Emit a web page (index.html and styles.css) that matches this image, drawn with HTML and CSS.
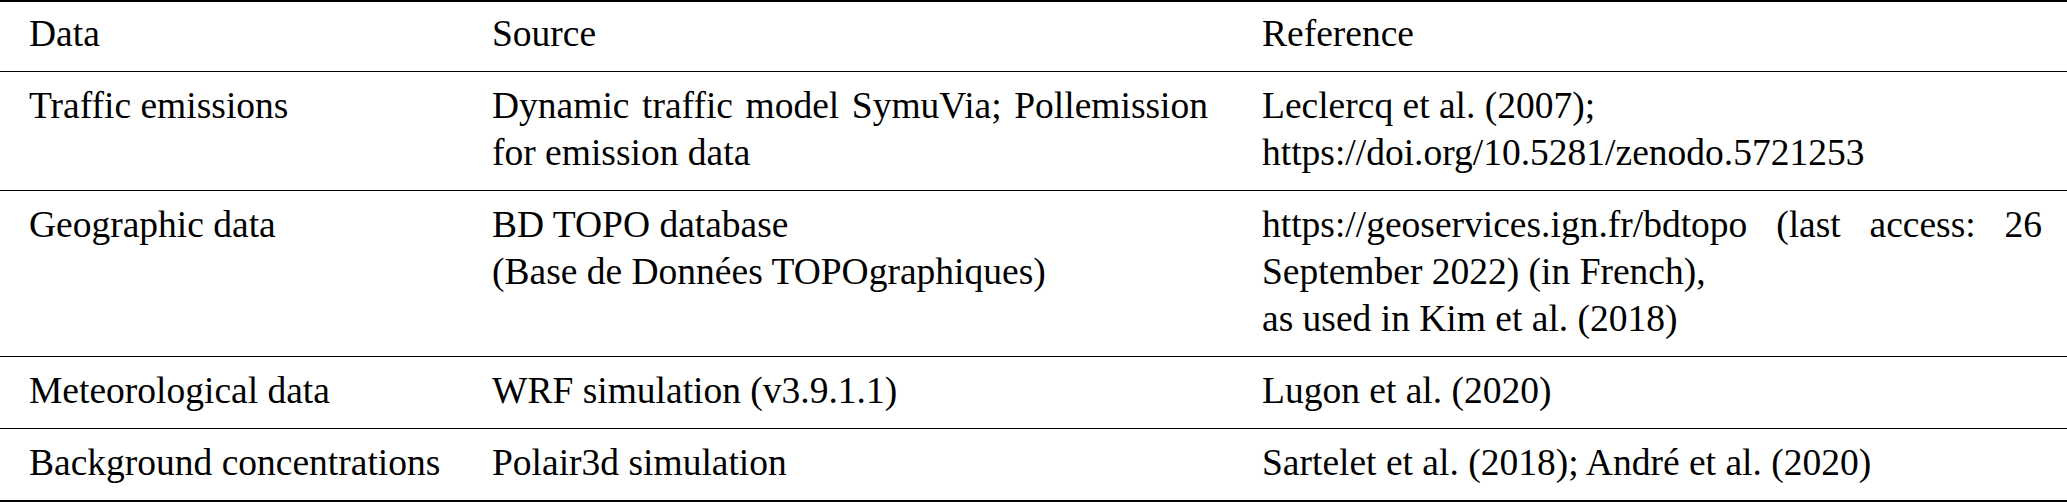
FILE: index.html
```html
<!DOCTYPE html>
<html lang="en">
<head>
<meta charset="utf-8">
<title>Data sources</title>
<link rel="stylesheet" href="styles.css">
</head>
<body>
<table class="data-table">
  <colgroup>
    <col class="col-data">
    <col class="col-source">
    <col class="col-ref">
  </colgroup>
  <thead>
    <tr class="head-row">
      <th class="name-cell">Data</th>
      <th>Source</th>
      <th>Reference</th>
    </tr>
  </thead>
  <tbody>
    <tr>
      <td class="name-cell">Traffic emissions</td>
      <td><span class="just">Dynamic traffic model SymuVia; Pollemission</span>for emission data</td>
      <td>Leclercq et al. (2007);<br>https://doi.org/10.5281/zenodo.5721253</td>
    </tr>
    <tr>
      <td class="name-cell">Geographic data</td>
      <td>BD TOPO database<br>(Base de Données TOPOgraphiques)</td>
      <td><span class="just">https://geoservices.ign.fr/bdtopo (last access: 26</span>September 2022) (in French),<br>as used in Kim et al. (2018)</td>
    </tr>
    <tr>
      <td class="name-cell">Meteorological data</td>
      <td>WRF simulation (v3.9.1.1)</td>
      <td>Lugon et al. (2020)</td>
    </tr>
    <tr class="last-row">
      <td class="name-cell">Background concentrations</td>
      <td>Polair3d simulation</td>
      <td>Sartelet et al. (2018); André et al. (2020)</td>
    </tr>
  </tbody>
</table>
</body>
</html>
```

FILE: styles.css
```css
html, body {
  margin: 0;
  padding: 0;
  background: #ffffff;
}

.data-table {
  width: 2067px;
  table-layout: fixed;
  border-collapse: collapse;
  border-top: 2px solid #000;
  border-bottom: 2px solid #000;
  font-family: "Liberation Serif", "Times New Roman", serif;
  font-size: 37.5px;
  line-height: 47px;
  color: #000;
}

.col-data { width: 463px; }
.col-source { width: 770px; }
.col-ref { width: 834px; }

.data-table th,
.data-table td {
  padding: 10px 25px 14px 29px;
  text-align: left;
  vertical-align: top;
  font-weight: normal;
}

.data-table .name-cell {
  padding-right: 0;
  white-space: nowrap;
}

.data-table tr {
  border-bottom: 1px solid #000;
}

.data-table .head-row th {
  padding-top: 8px;
}

.data-table .last-row {
  border-bottom: none;
}

.just {
  display: block;
  text-align: justify;
  text-align-last: justify;
}
```
